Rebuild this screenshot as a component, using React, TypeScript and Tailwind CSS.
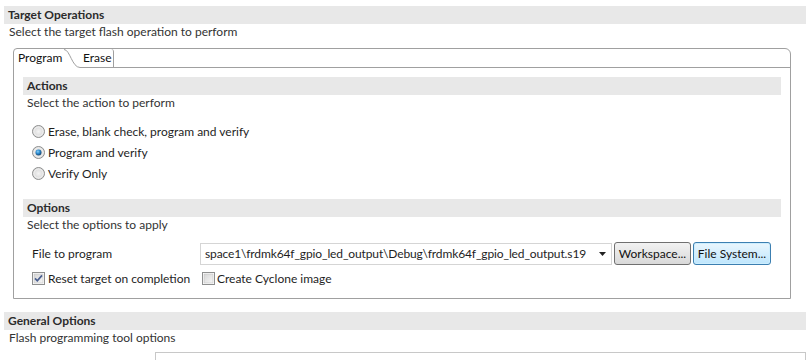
import React from 'react'

const BORDER = 'border-[#a0a0a0]'

function SectionBar({ title }: { title: string }) {
  return (
    <div className="h-[18px] bg-[#e8e8e8] px-[4px] font-bold leading-[18px] text-[#2b2b2b]">{title}</div>
  )
}

function Radio({ checked }: { checked?: boolean }) {
  return (
    <svg width="13" height="13" viewBox="0 0 13 13" className="shrink-0">
      <defs>
        <radialGradient id="rbg" cx="0.5" cy="0.5" r="0.5">
          <stop offset="0" stopColor="#f4f4f4" />
          <stop offset="1" stopColor="#d4d4d4" />
        </radialGradient>
        <radialGradient id="rdot" cx="0.4" cy="0.35" r="0.6">
          <stop offset="0" stopColor="#8ad0f5" />
          <stop offset="0.55" stopColor="#2a8ad0" />
          <stop offset="1" stopColor="#1c4f7a" />
        </radialGradient>
      </defs>
      <circle cx="6.5" cy="6.5" r="6" fill="url(#rbg)" stroke="#8e8f8f" strokeWidth="1" />
      <circle cx="6.5" cy="6.5" r="4.6" fill="none" stroke="#f6f6f6" strokeWidth="0.8" />
      {checked && <circle cx="6.5" cy="6.5" r="3" fill="url(#rdot)" />}
    </svg>
  )
}

function Check({ checked }: { checked?: boolean }) {
  return (
    <svg width="13" height="13" viewBox="0 0 13 13" className="shrink-0">
      <defs>
        <linearGradient id="cbg" x1="0" y1="0" x2="1" y2="1">
          <stop offset="0" stopColor="#d6d6d6" />
          <stop offset="1" stopColor="#f6f6f6" />
        </linearGradient>
      </defs>
      <rect x="0.5" y="0.5" width="12" height="12" fill="#ffffff" stroke="#8e8f8f" />
      <rect x="2" y="2" width="9" height="9" fill="url(#cbg)" stroke="#c2c2c2" strokeWidth="0.6" />
      {checked && <path d="M3 6.4 L5.3 8.8 L10 3.4" fill="none" stroke="#4a5f8f" strokeWidth="1.7" />}
    </svg>
  )
}

function RadioRow({ label, checked }: { label: string; checked?: boolean }) {
  return (
    <div className="flex h-[21px] items-center gap-[3px] pl-[9px]">
      <Radio checked={checked} />
      <span>{label}</span>
    </div>
  )
}

export default function App() {
  return (
    <div className="w-[806px] h-[360px] overflow-hidden bg-white text-[12px] text-[#1e1e1e] font-['Segoe_UI',Lato,'Open_Sans',sans-serif]">
      <div className="pt-[6px] pl-[4px]">
        <SectionBar title="Target Operations" />
        <p className="h-[16px] pl-[5px] leading-[16px] text-[#333]">Select the target flash operation to perform</p>

        {/* Tab folder */}
        <div className={`ml-[9px] mt-[8px] w-[778px] border ${BORDER} rounded-tl-[4px] rounded-tr-[6px]`}>
          <div className="flex h-[19px]">
            <div className="w-[50px] pl-[4px] leading-[18px] text-[#111] rounded-tl-[4px]">Program</div>
            <svg width="16" height="19" viewBox="0 0 16 19" className="shrink-0">
              <path d="M0 0.5 C6 0.5 8 18.5 16 18.5" fill="none" stroke="#a0a0a0" />
            </svg>
            <div className={`w-[34px] pl-[3px] leading-[18px] border-r border-b ${BORDER} rounded-tr-[3px] text-[#111]`}>Erase</div>
            <div className={`flex-1 border-b ${BORDER}`} />
          </div>

          <div className="px-[9px] pt-[9px] pb-[9px]">
            <SectionBar title="Actions" />
            <p className="h-[16px] pl-[4px] leading-[16px] text-[#333]">Select the action to perform</p>
            <div className="mt-[10px]">
              <RadioRow label="Erase, blank check, program and verify" />
              <RadioRow label="Program and verify" checked />
              <RadioRow label="Verify Only" />
            </div>

            <div className="mt-[15px]">
              <SectionBar title="Options" />
            </div>
            <p className="h-[16px] pl-[4px] leading-[16px] text-[#333]">Select the options to apply</p>

            <div className="mt-[9px] flex h-[23px] items-center">
              <div className="w-[177px] pl-[9px]">File to program</div>
              <div className="flex h-[22px] w-[412px] items-center border border-[#d5d5d5] bg-white pl-[4px] pr-[4px]">
                <span className="flex-1 whitespace-nowrap overflow-hidden tracking-[-0.12px]">space1\frdmk64f_gpio_led_output\Debug\frdmk64f_gpio_led_output.s19</span>
                <svg width="7" height="4" viewBox="0 0 7 4" className="ml-[6px] mr-[1px] shrink-0">
                  <path d="M0 0 H7 L3.5 4 Z" fill="#222" />
                </svg>
              </div>
              <button className="ml-[2px] h-[23px] w-[77px] rounded-[3px] border border-[#707070] bg-gradient-to-b from-[#f2f2f2] to-[#d9d9d9] text-center leading-[20px] text-[#111]">Workspace...</button>
              <button className="ml-[2px] h-[23px] w-[78px] rounded-[3px] border border-[#3c7fb1] bg-gradient-to-b from-[#eaf6fd] to-[#bee6fd] text-center leading-[20px] text-[#111] shadow-[inset_0_0_0_1px_#cdeefe]">File System...</button>
            </div>

            <div className="mt-[3px] flex h-[21px] items-center">
              <div className="flex w-[179px] items-center gap-[3px] pl-[9px]">
                <Check checked />
                <span>Reset target on completion</span>
              </div>
              <div className="flex items-center gap-[2px]">
                <Check />
                <span>Create Cyclone image</span>
              </div>
            </div>
          </div>
        </div>

        <div className="mt-[13px]">
          <SectionBar title="General Options" />
        </div>
        <p className="h-[16px] pl-[5px] leading-[16px] text-[#333]">Flash programming tool options</p>
        <div className="ml-[151px] mt-[6px] h-[30px] border border-[#c8c8c8]" />
      </div>
    </div>
  )
}
